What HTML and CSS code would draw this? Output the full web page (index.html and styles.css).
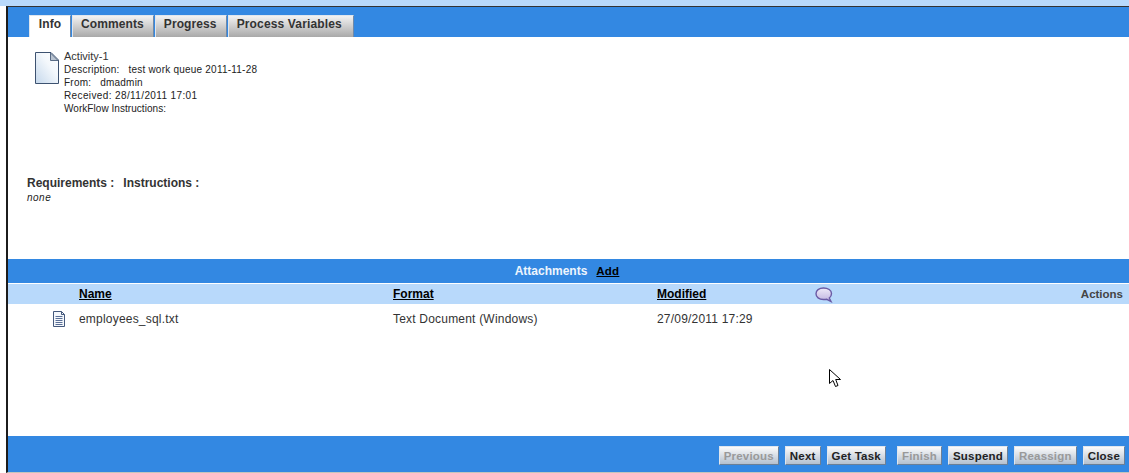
FILE: index.html
```html
<!DOCTYPE html>
<html lang="en">
<head>
<meta charset="utf-8">
<title>Activity-1</title>
<link rel="stylesheet" href="styles.css">
</head>
<body>
<div class="topstrip"></div>
<div class="window">
  <nav class="tabbar">
    <div class="tab active">Info</div>
    <div class="tab">Comments</div>
    <div class="tab">Progress</div>
    <div class="tab">Process Variables</div>
  </nav>
  <section class="info">
    <svg class="docicon" width="24" height="32" viewBox="0 0 24 32">
      <defs><linearGradient id="pg" x1="0" y1="1" x2="1" y2="0"><stop offset="0" stop-color="#c5d8ec"/><stop offset=".6" stop-color="#f4f8fc"/><stop offset="1" stop-color="#fff"/></linearGradient></defs>
      <path d="M.5.5H16L23.5 8V31.5H.5Z" fill="url(#pg)" stroke="#3d5270"/>
      <path d="M15.5 1V8.5H23Z" fill="#b9c3d0" stroke="#5a6c85"/>
    </svg>
    <div class="meta">
      <div class="title">Activity-1</div>
      <div class="line">Description: &nbsp; test work queue 2011-11-28</div>
      <div class="line">From: &nbsp; dmadmin</div>
      <div class="line wide">Received: 28/11/2011 17:01</div>
      <div class="line tight">WorkFlow Instructions:</div>
    </div>
  </section>
  <section class="reqs">
    <div class="reqhead"><span>Requirements :</span><span>Instructions :</span></div>
    <div class="none">none</div>
  </section>
  <section class="attach">
    <div class="attachbar"><span class="attachtitle">Attachments</span><a class="addlink">Add</a></div>
    <div class="cols">
      <a class="c-name">Name</a>
      <a class="c-format">Format</a>
      <a class="c-mod">Modified</a>
      <span class="c-bubble">
        <svg width="18" height="16" viewBox="0 0 18 16">
          <defs><linearGradient id="bg" x1="0" y1="0" x2="0" y2="1"><stop offset="0" stop-color="#eeeaf8"/><stop offset="1" stop-color="#bfb3e0"/></linearGradient></defs>
          <path d="M8.500 1C13 1 16.500 3.200 16.500 6.500C16.500 8.500 15.600 10 14.300 11L16 14.500L11.800 12.300C11 12.400 9.800 12.500 8.500 12.500C4 12.500 1 10 1 6.700C1 3.400 4 1 8.500 1Z" fill="url(#bg)" stroke="#6a5aa5" stroke-width="1.400"/>
        </svg>
      </span>
      <span class="c-actions">Actions</span>
    </div>
    <div class="filerow">
      <svg class="c-icon" width="14" height="16" viewBox="0 0 14 16">
        <path d="M1.500.5H9.500L12.500 3.500V15.500H1.500Z" fill="#f4f7fb" stroke="#44587c"/>
        <path d="M9.500.5V3.500H12.500" fill="none" stroke="#44587c"/>
        <path d="M3.500 5.500H10.500M3.500 7.500H10.500M3.500 9.500H10.500M3.500 11.500H10.500M3.500 13.500H10.500" stroke="#5a6f96"/>
      </svg>
      <span class="c-name file">employees_sql.txt</span>
      <span class="c-format file">Text Document (Windows)</span>
      <span class="c-mod file">27/09/2011 17:29</span>
    </div>
    <svg class="cursor" width="14" height="21" viewBox="0 0 14 21">
      <path d="M1.500 1.500V15.500L5 12.500L7.500 18.500L10 17.500L7.700 11.500H12.500Z" fill="#fff" stroke="#000"/>
    </svg>
  </section>
  <footer class="footerbar">
    <button class="btn off">Previous</button>
    <button class="btn">Next</button>
    <button class="btn gap">Get Task</button>
    <button class="btn off">Finish</button>
    <button class="btn">Suspend</button>
    <button class="btn off">Reassign</button>
    <button class="btn">Close</button>
  </footer>
</div>
</body>
</html>
```
FILE: styles.css
```css
html, body {
  margin: 0;
  padding: 0;
  background: #fff;
}
body {
  width: 1129px;
  height: 473px;
  overflow: hidden;
  font-family: "Liberation Sans", Arial, sans-serif;
  color: #222;
}
.topstrip {
  height: 6px;
  background: #b8d9fb;
}
.window {
  margin-left: 6px;
  height: 467px;
  box-sizing: border-box;
  border-left: 2px solid #1c1c1c;
  border-top: 1px solid #333;
  border-bottom: 1px solid #c4c4bc;
  display: flex;
  flex-direction: column;
}
.tabbar {
  height: 30px;
  flex: none;
  background: #3388e2;
  display: flex;
  align-items: flex-end;
  padding-left: 21px;
  gap: 1px;
  box-sizing: border-box;
}
.tab {
  height: 22px;
  box-sizing: border-box;
  padding: 1px 9px 0 8px;
  font-size: 12px;
  font-weight: bold;
  letter-spacing: .1px;
  color: #333;
  background: linear-gradient(#f2f2f2, #a9a9a9);
  border: 1px solid #dfe6ee;
  border-bottom: 0;
  border-right: 1px solid #6f89a8;
}
.tab:last-child {
  padding-right: 11px;
  letter-spacing: .15px;
}
.tab.active {
  background: #fff;
  text-align: center;
  padding: 1px 0 0;
  width: 42px;
}
.info {
  flex: none;
  height: 119px;
  box-sizing: border-box;
  padding: 13px 0 0 27px;
  display: flex;
  gap: 5px;
}
.docicon { flex: none; margin-top: 2px; }
.title {
  font-size: 11px;
  line-height: 13px;
  color: #333;
}
.line {
  font-size: 10px;
  line-height: 13px;
  letter-spacing: .22px;
  color: #222;
}
.line.wide { letter-spacing: .38px; }
.line.tight { letter-spacing: .05px; }
.reqs {
  flex: none;
  height: 103px;
  padding-left: 19px;
  box-sizing: border-box;
  padding-top: 20px;
}
.reqhead {
  display: flex;
  gap: 9px;
  font-size: 12px;
  font-weight: bold;
  line-height: 14px;
  color: #333;
}
.none {
  font-size: 10px;
  font-style: italic;
  line-height: 14px;
  padding-top: 1px;
  letter-spacing: .5px;
}
.attach {
  position: relative;
  flex: 1;
  display: flex;
  flex-direction: column;
}
.attachbar {
  height: 24px;
  background: #3388e2;
  border-bottom: 1px solid #fff;
  display: flex;
  justify-content: center;
  align-items: center;
  gap: 9px;
  font-size: 12px;
  font-weight: bold;
  flex: none;
  padding-right: 3px;
}
.attachtitle { color: #eef5fd; }
.addlink {
  color: #000;
  font-size: 11.500px;
  text-decoration: underline;
  letter-spacing: .2px;
}
.cols, .filerow {
  display: grid;
  align-items: center;
}
.cols {
  grid-template-columns: 385px 264px 158px 18px 1fr;
  height: 20px;
  background: #b8d9fb;
  font-size: 12px;
  font-weight: bold;
  flex: none;
}
.cols a {
  color: #000;
  text-decoration: underline;
}
.c-name { padding-left: 71px; white-space: nowrap; }
.c-bubble { display: flex; padding-top: 2px; }
.c-actions {
  text-align: right;
  padding-right: 6px;
  font-size: 11.500px;
  color: #444;
}
.filerow {
  grid-template-columns: 385px 264px 1fr;
  position: relative;
  height: 30px;
  flex: none;
  font-size: 12px;
  color: #333;
}
.c-icon {
  position: absolute;
  left: 44px;
  top: 7px;
}
.file { letter-spacing: .2px; }
.cursor {
  position: absolute;
  left: 820px;
  top: 109px;
}
.footerbar {
  height: 36px;
  flex: none;
  background: #3388e2;
  display: flex;
  justify-content: flex-end;
  align-items: flex-end;
  padding: 0 4px 7px 0;
  gap: 6px;
  box-sizing: border-box;
}
.btn {
  height: 19px;
  padding: 0 4px;
  font-family: "Liberation Sans", Arial, sans-serif;
  font-size: 11.500px;
  font-weight: bold;
  letter-spacing: .2px;
  color: #222;
  background: linear-gradient(#fbfbfb, #b4c0cf);
  border: 1px solid #6b7f96;
  border-top-color: #dfe6ee;
  border-left-color: #dfe6ee;
}
.btn.off { color: #999; }
.btn.gap { margin-right: 5px; }
```
